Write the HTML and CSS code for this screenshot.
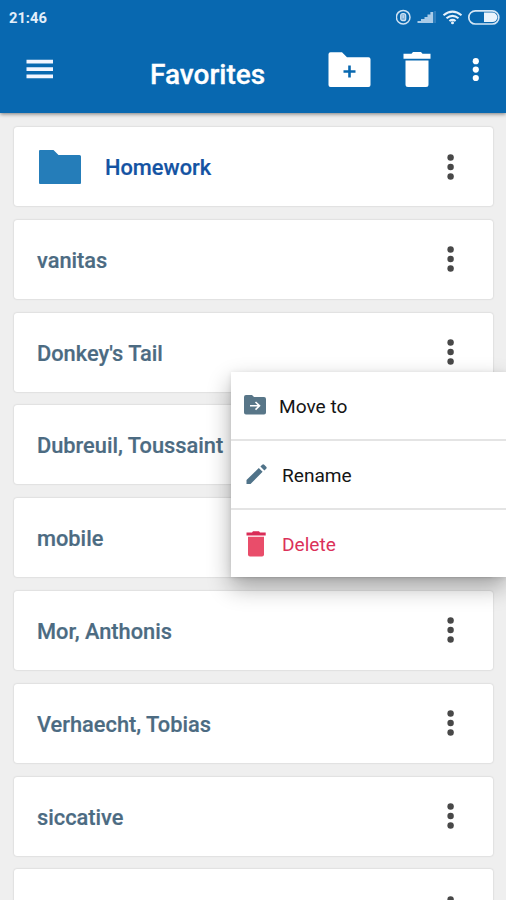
FILE: index.html
```html
<!DOCTYPE html>
<html lang="en">
<head>
<meta charset="utf-8">
<title>Favorites</title>
<link rel="stylesheet" href="styles.css">
</head>
<body>
<svg class="defs" width="0" height="0">
  <symbol id="dots" viewBox="0 0 8 30"><circle cx="3.600" cy="5.500" r="3.200"/><circle cx="3.600" cy="15" r="3.200"/><circle cx="3.600" cy="24.500" r="3.200"/></symbol>
</svg>
<header class="header">
  <div class="status">
    <span class="clock">21:46</span>
    <svg class="status-icons" width="106" height="18" viewBox="0 0 106 18">
      <circle cx="7.200" cy="9.200" r="6.800" fill="none" stroke="#cfe2f3" stroke-width="1.500"/>
      <rect x="4.700" y="5.700" width="5" height="7" rx="2" fill="#86b4db" stroke="#cfe2f3" stroke-width="1.200"/>
      <path d="M7.200 7v3" stroke="#cfe2f3"/>
      <path d="M21.500 15v-2H25v2zM25 15v-4h3.500v4zM28.500 15V9h3v6zM31.500 15V6.500h2.900V15zM34.400 15V4h2.800v11z" fill="#a9cbe8"/>
      <path d="M38.300 3h1.500v12h-1.500z" fill="#3c86c2"/>
      <g fill="none" stroke="#e6f1fa" stroke-width="2.100"><path d="M47.500 7.200q9-7.200 18 0"/><path d="M50.500 10.300q6-4.800 12 0"/><path d="M53.400 13q3.100-2.300 6.200 0"/></g>
      <circle cx="56.500" cy="14.700" r="1.500" fill="#e6f1fa"/>
      <rect x="72.800" y="2.800" width="30" height="13.200" rx="6.600" fill="none" stroke="#d5e6f5" stroke-width="1.700"/>
      <path d="M88 4.500h8.500a4.800 4.800 0 0 1 0 9.600H88z" fill="#e9f3fc"/>
    </svg>
  </div>
  <div class="toolbar">
    <svg class="menu-btn" width="27" height="20" viewBox="0 0 27 20" fill="#f2f5ff"><path d="M.5.8H27v3.700H.5zM.5 8.200H27v3.700H.5zM.5 15.500H27v3.700H.5z"/></svg>
    <h1 class="title">Favorites</h1>
    <svg class="add-btn" width="43" height="36" viewBox="0 0 43 36"><path d="M2.500.3H14l5 5h21.500a2 2 0 0 1 2 2V33a2 2 0 0 1-2 2h-38a2 2 0 0 1-2-2V2.300a2 2 0 0 1 2-2z" fill="#fff"/><path d="M21.500 13.500v12M15.500 19.500h12" stroke="#0868b0" stroke-width="2.600"/></svg>
    <svg class="trash-btn" width="28" height="36" viewBox="0 0 28 36" fill="#fff"><path d="M.5 1.800h8L10 0h8l1.500 1.800h8v5H.5zM2.500 8.600h23v24a2.500 2.500 0 0 1-2.500 2.500H5a2.500 2.500 0 0 1-2.500-2.500z"/></svg>
    <svg class="more-btn" width="8" height="26" viewBox="0 0 8 26" fill="#fff"><circle cx="3.800" cy="4.200" r="3.100"/><circle cx="3.800" cy="12.600" r="3.100"/><circle cx="3.800" cy="21" r="3.100"/></svg>
  </div>
</header>
<main class="list">
  <article class="card folder">
    <svg class="folder-icon" width="42" height="34" viewBox="0 0 42 34"><path d="M1 0h13.500l5 5H40.500q1.500 0 1.500 1.500V33q0 1-1 1H1q-1 0-1-1V1q0-1 1-1z" fill="#257db9"/></svg>
    <span class="name">Homework</span><svg class="dots"><use href="#dots"/></svg>
  </article>
  <article class="card"><span class="name">vanitas</span><svg class="dots"><use href="#dots"/></svg></article>
  <article class="card"><span class="name">Donkey's Tail</span><svg class="dots"><use href="#dots"/></svg></article>
  <article class="card"><span class="name">Dubreuil, Toussaint</span><svg class="dots"><use href="#dots"/></svg></article>
  <article class="card"><span class="name">mobile</span><svg class="dots"><use href="#dots"/></svg></article>
  <article class="card"><span class="name">Mor, Anthonis</span><svg class="dots"><use href="#dots"/></svg></article>
  <article class="card"><span class="name">Verhaecht, Tobias</span><svg class="dots"><use href="#dots"/></svg></article>
  <article class="card"><span class="name">siccative</span><svg class="dots"><use href="#dots"/></svg></article>
  <article class="card"><span class="name"></span><svg class="dots"><use href="#dots"/></svg></article>
</main>
<nav class="popup">
  <div class="item move">
    <svg width="22" height="20" viewBox="0 0 22 20"><path d="M2 0h6l2 2h10q2 0 2 2v13.500q0 2-2 2H2q-2 0-2-2V2q0-2 2-2z" fill="#587688"/><path d="M6 10.800h9M11.500 7l4 3.800-4 3.800" fill="none" stroke="#fff" stroke-width="1.600"/></svg>
    <span class="label">Move to</span>
  </div>
  <div class="item rename">
    <svg width="22" height="22" viewBox="0 0 22 22" fill="#507389"><path d="M.5 17L12.800 5l3.800 3.800L4.500 21h-4zM14.400 3.500l1.800-1.800q1-1 2 0l2 2q1 1 0 2l-1.800 1.800z"/></svg>
    <span class="label">Rename</span>
  </div>
  <div class="item delete">
    <svg width="20" height="26" viewBox="0 0 20 26"><path d="M.5 1.500H6L7 .3h6l1 1.200h5.700v3H.5z" fill="#d92c57"/><path d="M2 5.800h16v17.700q0 2-2 2H4q-2 0-2-2z" fill="#e94d6a"/></svg>
    <span class="label">Delete</span>
  </div>
</nav>
</body>
</html>
```
FILE: styles.css
```css
* { box-sizing: border-box; }
html, body { height: 100%; }
body {
  position: relative;
  display: flex;
  flex-direction: column;
  margin: 0;
  overflow: hidden;
  background: #efefef;
  font-family: Roboto, "Liberation Sans", sans-serif;
}
svg { display: block; flex: none; }
.defs { position: absolute; }
.header {
  position: relative;
  flex: none;
  height: 113px;
  background: #0868b0;
  box-shadow: 0 1px 4px rgba(0, 0, 0, .5);
  color: #fff;
}
.status {
  display: flex;
  justify-content: space-between;
  height: 36px;
  padding: 8px 4px 0 9px;
}
.clock { font-size: 14.7px; line-height: 20px; font-weight: 700; color: #e3effa; }
.toolbar { display: flex; align-items: flex-start; padding-left: 26px; }
.menu-btn { margin-top: 23px; }
.title {
  width: 177px;
  margin: 22px 0 0;
  padding-left: 97px;
  box-sizing: content-box;
  font-size: 28px;
  line-height: 34px;
  font-weight: 500;
  white-space: nowrap;
  -webkit-text-stroke: .3px currentColor;
}
.add-btn { margin: 16px 0 0 1px; }
.trash-btn { margin: 16px 0 0 32px; }
.more-btn { margin: 21px 0 0 41px; }
.list {
  display: flex;
  flex-direction: column;
  flex: 1;
  min-height: 0;
  gap: 13.8px;
  overflow: hidden;
  padding: 14px 13px 0 14px;
}
.card {
  display: flex;
  align-items: center;
  flex: none;
  height: 79px;
  padding: 0 38px 0 23px;
  border-radius: 3px;
  background: #fff;
  box-shadow: 0 0 2px rgba(0, 0, 0, .2);
}
.name {
  flex: 1;
  padding-top: 3px;
  color: #4c6b82;
  font-size: 21.8px;
  line-height: 28px;
  font-weight: 500;
  white-space: nowrap;
  -webkit-text-stroke: .2px currentColor;
}
.folder .name { padding-top: 2px; color: #1453a3; }
.folder-icon { margin: 0 24px 0 2px; }
.dots { width: 8px; height: 30px; fill: #484848; }
.popup {
  position: absolute;
  top: 372px;
  left: 231px;
  right: 0;
  height: 205px;
  background: #fff;
  box-shadow: 0 10px 22px rgba(0, 0, 0, .32), 0 1px 5px rgba(0, 0, 0, .1);
}
.item {
  display: flex;
  align-items: center;
  height: 69px;
  border-bottom: 2px solid #e4e4e4;
  color: #151515;
  font-size: 19.1px;
}
.label { padding-top: 2px; }
.item svg { margin-top: -1px; }
.item.move { padding-left: 13px; gap: 13px; }
.item.rename { padding-left: 15px; gap: 14px; }
.item.delete { height: 67px; padding-left: 15px; gap: 16px; border: 0; color: #db3159; }
.item.delete svg { margin-top: 0; }
.delete .label { padding-top: 1px; }
```
